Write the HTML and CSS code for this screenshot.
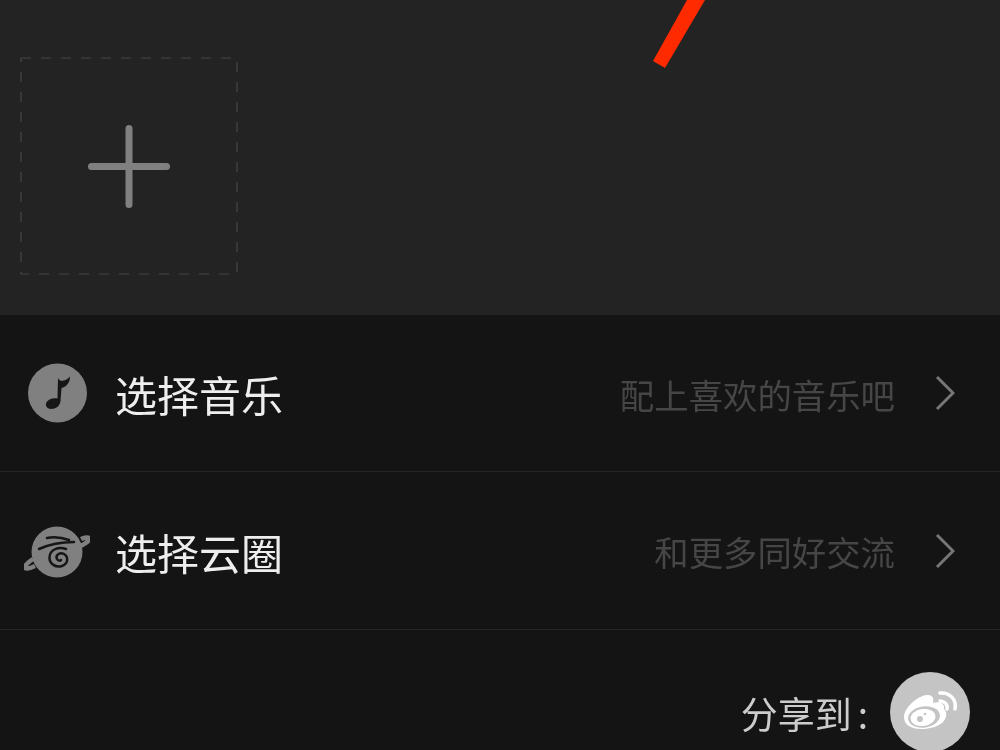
FILE: index.html
```html
<!DOCTYPE html>
<html lang="zh-CN">
<head>
<meta charset="utf-8">
<title>选择音乐</title>
<link rel="stylesheet" href="styles.css">
</head>
<body>
<div class="page">
  <svg class="mark" width="60" height="70" viewBox="0 0 60 70"><polygon points="0,61 12,68 52,0 34,0" fill="#ff2a00"/></svg>
  <section class="top">
    <svg class="add" width="218" height="218" viewBox="0 0 218 218">
      <rect x="1" y="1" width="216" height="216" fill="none" stroke="#464646" stroke-width="1.2" stroke-dasharray="10 10"/>
      <path d="M71.500 109.500H146.500M109 71.500V147.500" fill="none" stroke="#808080" stroke-width="7" stroke-linecap="round"/>
    </svg>
  </section>
  <section class="list">
    <div class="row">
      <svg class="icon" width="66" height="60" viewBox="0 0 66 60">
        <circle cx="33.500" cy="30" r="29.500" fill="#808080"/>
        <path d="M34 15C35.500 19 41 19 46 13.500C46 20 42 24 37.500 25L36.500 38C36 43 32 46 27 46C22.500 46 20.500 42 23 38.500C25.500 35.500 29.500 34.500 33.500 35.500Z" fill="#161616"/>
      </svg>
      <span class="label">选择音乐</span>
      <span class="hint">配上喜欢的音乐吧</span>
      <svg class="chevron" width="20" height="36" viewBox="0 0 20 36"><path d="M2 2L18 18L2 34" fill="none" stroke="#777" stroke-width="3"/></svg>
    </div>
    <div class="row">
      <svg class="icon" width="66" height="60" viewBox="0 0 66 60">
        <path d="M9 38C3 42 0 45 1 47C3 48 7 47 11 45M56 25C60 24 65 20 65.500 17.500C65 16 61 16 57 18" fill="none" stroke="#808080" stroke-width="4.500"/>
        <circle cx="33" cy="31" r="25.500" fill="#808080"/>
        <path d="M23 17C30 15.500 38 16.500 45 19M15 28C26 23 39 21 50 21M42 28C34 25 26 29 25.500 36C25 43 32 47 38 45C44 43 45 36 40 33C36 31 31 34 33 38C34 40 36 40 37 39" fill="none" stroke="#161616" stroke-width="2.500" stroke-linecap="round"/>
      </svg>
      <span class="label">选择云圈</span>
      <span class="hint">和更多同好交流</span>
      <svg class="chevron" width="20" height="36" viewBox="0 0 20 36"><path d="M2 2L18 18L2 34" fill="none" stroke="#777" stroke-width="3"/></svg>
    </div>
  </section>
  <section class="share">
    <span class="share-label">分享到<span class="colon">:</span></span>
    <span class="weibo">
      <svg width="80" height="80" viewBox="0 0 80 80">
        <path d="M14 45C14 36 27 24 37 23C43 22.500 44 27 43 31C49 29 55 31 54 37C58 40 57 49 49 53C41 58 14 61 14 45Z" fill="#fff"/>
        <ellipse cx="34" cy="45" rx="16" ry="10.500" fill="#c4c4c4" transform="rotate(-8 34 45)"/>
        <ellipse cx="33" cy="45.500" rx="12.500" ry="8.500" fill="#fff" transform="rotate(-8 33 45.500)"/>
        <circle cx="30" cy="47" r="3" fill="#c4c4c4"/>
        <circle cx="35" cy="42" r="1.300" fill="#c4c4c4"/>
        <path d="M50 29C54 29 58 32 57 37M50 21C59 20 67 27 65 37" fill="none" stroke="#fff" stroke-width="3.500" stroke-linecap="round"/>
      </svg>
    </span>
  </section>
</div>
</body>
</html>
```
FILE: styles.css
```css
html, body {
  margin: 0;
  padding: 0;
  background: #141414;
}

.page {
  position: relative;
  width: 1000px;
  height: 750px;
  overflow: hidden;
  font-family: "Noto Sans CJK SC", "Noto Sans", sans-serif;
  font-weight: 400;
  filter: blur(0.5px);
}

.mark {
  position: absolute;
  left: 653px;
  top: 0;
}

.top {
  height: 315px;
  box-sizing: border-box;
  padding: 57px 0 0 20px;
  background: #232323;
}

.add {
  display: block;
}

.row {
  display: flex;
  align-items: center;
  height: 157px;
  box-sizing: border-box;
  padding: 0 45px 0 24px;
  border-bottom: 1px solid #262626;
}

.row:last-child {
  height: 158px;
}

.icon {
  flex: none;
}

.label {
  margin: 2px 0 0 25px;
  font-size: 42px;
  line-height: 1;
  color: #eeeeee;
}

.hint {
  margin: 2px 0 0 auto;
  font-size: 34.400px;
  line-height: 1;
  color: #464646;
}

.chevron {
  flex: none;
  margin-left: 40px;
}

.share {
  display: flex;
  justify-content: flex-end;
  align-items: center;
  gap: 22px;
  padding: 42px 30px 0 0;
}

.share-label {
  margin-top: 2px;
  font-size: 37px;
  line-height: 1;
  color: #cccccc;
}

.colon {
  margin-left: 6px;
}

.weibo {
  display: block;
  flex: none;
  width: 80px;
  height: 80px;
  border-radius: 50%;
  background: #c4c4c4;
}

.weibo svg {
  display: block;
}
```
